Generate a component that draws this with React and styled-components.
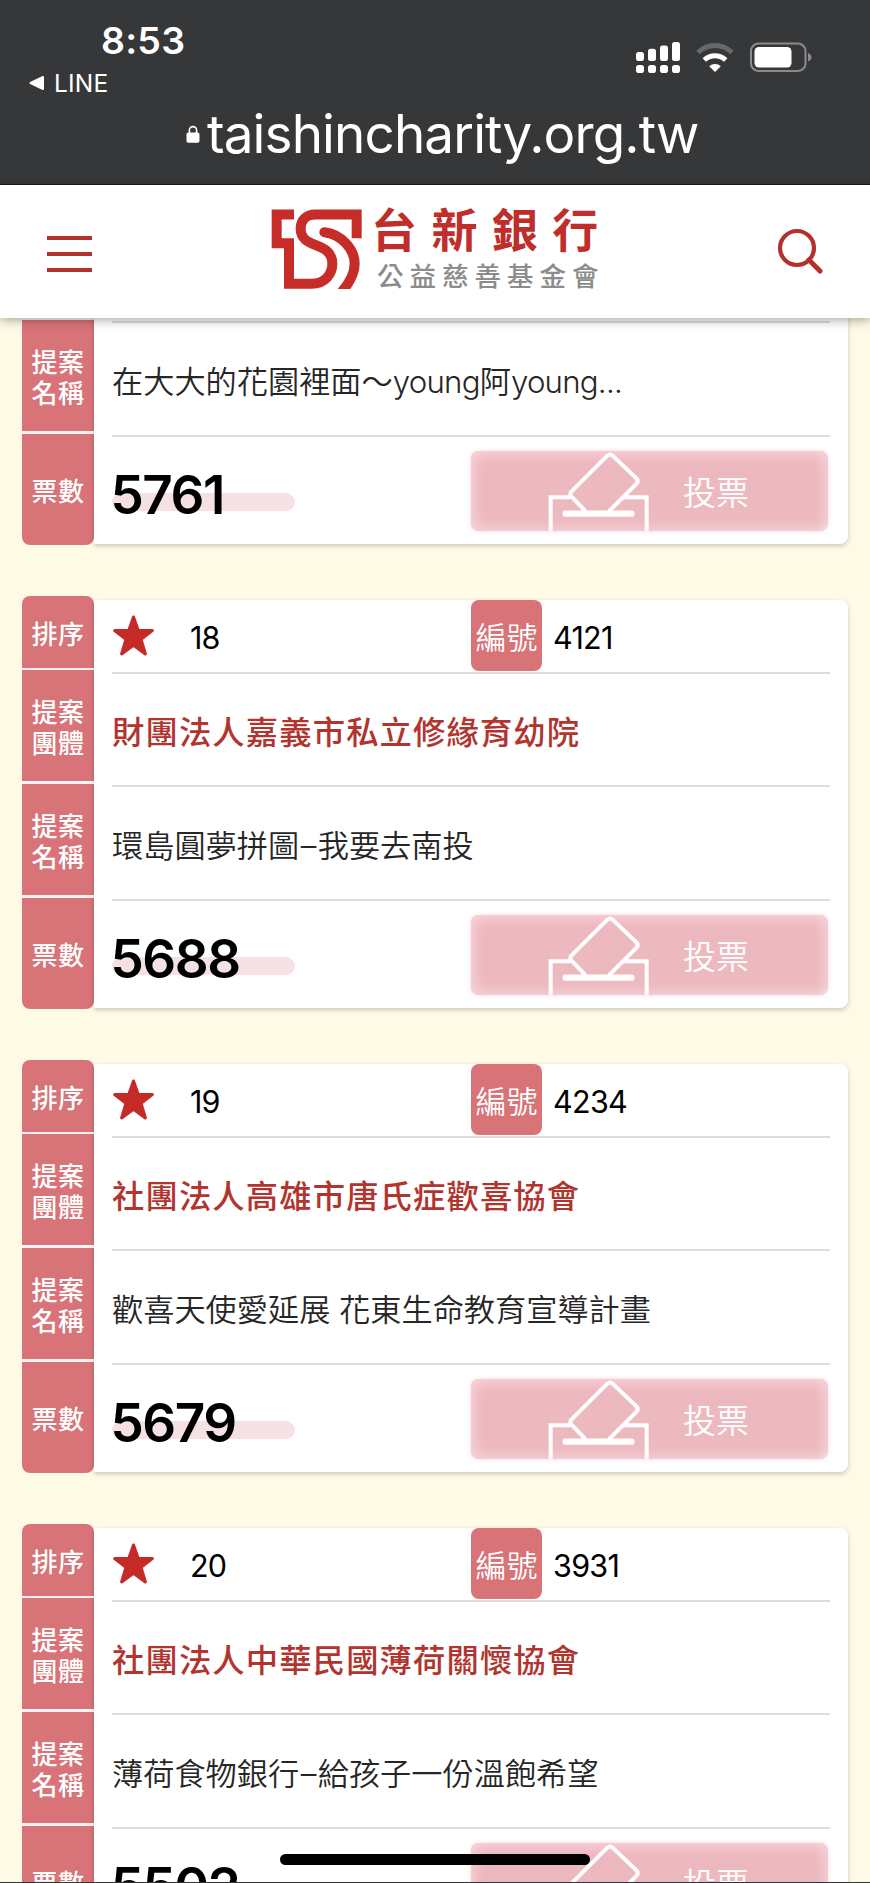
import styled, { createGlobalStyle } from "styled-components";

const GlobalStyle = createGlobalStyle`
  * {
    box-sizing: border-box;
  }
  body {
    margin: 0;
    background: #fefae6;
    font-family: Inter, "Noto Sans CJK TC", sans-serif;
  }
`;

const Screen = styled.div`
  width: 870px;
  height: 1883px;
  display: flex;
  flex-direction: column;
  overflow: hidden;
  position: relative;
  background: #fefae6;
`;

const BrowserBar = styled.div`
  height: 185px;
  flex-shrink: 0;
  background: #363739;
  border-bottom: 1px solid #1b1c1d;
  color: #fff;
`;

const StatusRow = styled.div`
  height: 100px;
  display: flex;
  justify-content: space-between;
  padding: 20px 58px 0 29px;
`;

const Clock = styled.div`
  height: 42px;
  line-height: 42px;
  padding-left: 72px;
  font-size: 37.5px;
  font-weight: 600;
  letter-spacing: 0.2px;
`;

const BackLink = styled.div`
  display: flex;
  align-items: center;
  gap: 9px;
  height: 42px;
  font-size: 24.5px;
  letter-spacing: 0.2px;
`;

const StatusIcons = styled.div`
  display: flex;
  align-items: flex-start;
  gap: 16px;
  padding-top: 22px;
`;

const AddressRow = styled.div`
  height: 68px;
  display: flex;
  align-items: center;
  padding-left: 186px;
  gap: 7px;
`;

const Address = styled.div`
  font-size: 53px;
  line-height: 66px;
  letter-spacing: -0.88px;
  white-space: nowrap;
`;

const Header = styled.header`
  height: 133px;
  flex-shrink: 0;
  display: flex;
  align-items: flex-start;
  justify-content: space-between;
  padding: 24px 47px 0;
  background: #fff;
  box-shadow: 0 2px 10px rgba(0, 0, 0, 0.35);
  position: relative;
  z-index: 1;
`;

const MenuButton = styled.button`
  width: 45px;
  height: 36px;
  margin-top: 27px;
  padding: 0;
  border: 0;
  background: none;
  display: flex;
  flex-direction: column;
  justify-content: space-between;
`;

const MenuLine = styled.span`
  height: 4.4px;
  background: #b3302c;
`;

const SearchButton = styled.button`
  margin-top: 18px;
  padding: 0;
  border: 0;
  background: none;
  line-height: 0;
`;

const Brand = styled.div`
  display: flex;
  margin-left: 8px;
  gap: 8px;
`;

const BrandText = styled.div`
  width: 234px;
  margin-top: -2px;
  white-space: nowrap;
`;

const BankName = styled.div`
  height: 53px;
  line-height: 46px;
  font-size: 46px;
  font-weight: 700;
  letter-spacing: 14.4px;
  color: #bf2e2a;
`;

const FundName = styled.div`
  height: 32px;
  line-height: 32px;
  padding-left: 6px;
  font-size: 26.5px;
  font-weight: 500;
  letter-spacing: 6px;
  color: #8c8c8c;
`;

const List = styled.main`
  flex: 1;
  min-height: 0;
  overflow: hidden;
`;

const Cards = styled.div`
  margin-top: -186px;
  padding: 0 22px;
  display: flex;
  flex-direction: column;
  gap: 51px;
`;

const Card = styled.article`
  height: 413px;
  display: flex;
  flex-shrink: 0;
`;

const Tabs = styled.div`
  width: 72px;
  height: 412.7px;
  display: grid;
  grid-template-rows: 71.7px 111.5px 111.5px 1fr;
  gap: 2.3px;
  background: #fff4f4;
  border-radius: 8px;
  overflow: hidden;
`;

const Tab = styled.div`
  display: flex;
  align-items: center;
  justify-content: center;
  padding-top: 4px;
  text-align: center;
  white-space: pre-line;
  background: #d87378;
  color: #fff;
  font-size: 26px;
  font-weight: 500;
  line-height: 31px;
  letter-spacing: 0.5px;

  &:first-child {
    padding-top: 6px;
  }
`;

const Body = styled.div`
  width: 754px;
  height: 408.3px;
  margin-top: 4px;
  padding: 0 18px;
  background: #fff;
  border-radius: 0 8px 8px 0;
  box-shadow: 0 2px 5px rgba(0, 0, 0, 0.2);
`;

const Row = styled.div`
  height: ${(p) => p.$height}px;
  display: flex;
  align-items: center;
  border-bottom: ${(p) => (p.$last ? "0" : "2px solid #dedede")};
  white-space: nowrap;
`;

const Cell = styled.div`
  width: 359px;
  flex-shrink: 0;
  display: flex;
  align-items: center;
`;

const Rank = styled.span`
  margin-left: 35px;
  padding-top: 4px;
  font-size: 30.5px;
  letter-spacing: -0.8px;
  color: #000;
`;

const Badge = styled.span`
  width: 71px;
  height: 71px;
  margin-right: 11px;
  display: flex;
  align-items: center;
  justify-content: center;
  background: #d87378;
  border-radius: 8px;
  color: #fff;
  font-size: 31px;
  font-weight: 350;
`;

const SerialNo = styled.span`
  padding-top: 4px;
  font-size: 30.5px;
  letter-spacing: -0.7px;
  color: #000;
`;

const Group = styled.h2`
  margin: 0;
  font-size: 32.3px;
  font-weight: 500;
  letter-spacing: 1.15px;
  color: #b1342e;
`;

const Title = styled.p`
  margin: 0;
  font-size: 31.2px;
  font-weight: 350;
  color: #262626;
`;

const Latin = styled.span`
  letter-spacing: -0.75px;
`;

const Dash = styled.span`
  padding: 0 1.5px;
`;

const Votes = styled.div`
  position: relative;
  z-index: 0;
  width: 183px;
  height: 64px;
  margin-top: 8px;
  line-height: 64px;
  font-size: 53px;
  font-weight: 600;
  letter-spacing: -1.5px;
  text-indent: -1.5px;
  color: #000;

  &::after {
    content: "";
    position: absolute;
    z-index: -1;
    left: 0;
    top: 30px;
    width: 183px;
    height: 18px;
    border-radius: 9px;
    background: #f5e0e3;
  }
`;

const VoteButton = styled.button`
  width: 357px;
  height: 80px;
  padding: 0 0 0 77px;
  border: 0;
  border-radius: 8px;
  display: flex;
  align-items: center;
  gap: 33px;
  background: #ecb9bf;
  box-shadow:
    inset 0 0 16px rgba(250, 240, 240, 0.75),
    inset 0 8px 16px rgba(250, 180, 198, 0.6),
    0 0 4px rgba(236, 185, 191, 0.5);
  color: #fff;
  font-family: inherit;
  font-size: 33px;
  font-weight: 350;
`;

const HomeIndicator = styled.div`
  position: absolute;
  left: 280px;
  bottom: 18px;
  width: 310px;
  height: 11px;
  border-radius: 6px;
  background: #000;
`;

const BottomEdge = styled.div`
  position: absolute;
  left: 0;
  right: 0;
  bottom: 0;
  height: 1px;
  background: #333;
`;

const Logo = () => (
  <svg width="92" height="80" viewBox="33 28 276 239">
    <g fill="none" stroke="#c62d28" strokeWidth="30">
      <path d="M102 44H50V130H87V252H155C195 252 217 222 217 192C217 122 122 150 122 87C122 62 138 44 165 44H290V115" />
      <path
        d="M193 97C240 102 284 145 284 192C284 224 268 250 244 278"
        strokeLinecap="round"
      />
    </g>
  </svg>
);

const Star = () => (
  <svg width="43" height="43" viewBox="0 0 42 42">
    <path
      d="M21 3L25.6 16.2H39.4L28.4 24.8L32.6 39L21 30.6L9.4 39L13.6 24.8L2.6 16.2H16.4Z"
      fill="#c42b26"
      stroke="#c42b26"
      strokeWidth="3"
      strokeLinejoin="round"
    />
  </svg>
);

const BallotBox = () => (
  <svg width="102" height="80" viewBox="25 18 306 240">
    <g
      fill="none"
      stroke="#fff"
      strokeWidth="12"
      strokeLinejoin="round"
      strokeLinecap="round"
    >
      <path d="M33 266V157H90M252 157H321V266" strokeLinejoin="miter" />
      <path d="M136 197L95 154Q89 147 95 140L203 32Q211 25 219 32L291 101Q297 108 291 116L210 197" />
      <path d="M78 206H275" strokeWidth="19" />
    </g>
  </svg>
);

const Lock = () => (
  <svg width="14" height="18" viewBox="0 0 14 18">
    <path
      d="M3.4 8V5.2a3.6 3.6 0 0 1 7.2 0V8"
      fill="none"
      stroke="#fff"
      strokeWidth="1.6"
    />
    <rect x="0.5" y="7.6" width="13" height="10.2" rx="1.8" fill="#fff" />
  </svg>
);

const Signal = () => (
  <svg width="44" height="32" viewBox="0 0 44 32" fill="#fff">
    {[0, 12, 24, 36].map((x, i) => (
      <g key={x}>
        <rect x={x} y={10 - i * 3.3} width="8" height={9 + i * 3.3} rx="2.5" />
        <rect x={x} y="23" width="8" height="8" rx="2.8" />
      </g>
    ))}
  </svg>
);

const Wifi = () => (
  <svg width="38" height="30" viewBox="0 0 38 30">
    <path
      d="M2 10.5A24 24 0 0 1 36 10.5"
      fill="none"
      stroke="#67686a"
      strokeWidth="5"
    />
    <path
      d="M8.3 18A15.5 15.5 0 0 1 29.7 18"
      fill="none"
      stroke="#fff"
      strokeWidth="5"
    />
    <path d="M19 30L13.2 24.2A8.4 8.4 0 0 1 24.8 24.2Z" fill="#fff" />
  </svg>
);

const Battery = () => (
  <svg width="62" height="30" viewBox="0 0 62 30">
    <rect
      x="1"
      y="1.5"
      width="54.5"
      height="27.5"
      rx="7.5"
      fill="none"
      stroke="#8b8c8d"
      strokeWidth="2"
    />
    <rect x="4.5" y="5" width="37" height="20.5" rx="4.5" fill="#fff" />
    <path d="M58 11q3.4 1.2 3.4 4.3T58 19.5Z" fill="#8b8c8d" />
  </svg>
);

const proposals = [
  // top rows are scrolled under the header
  {
    title: (
      <>
        在大大的花園裡面～<Latin>young</Latin>阿<Latin>young...</Latin>
      </>
    ),
    votes: 5761,
  },
  {
    rank: 18,
    no: "4121",
    group: "財團法人嘉義市私立修緣育幼院",
    title: (
      <>
        環島圓夢拼圖<Dash>–</Dash>我要去南投
      </>
    ),
    votes: 5688,
  },
  {
    rank: 19,
    no: "4234",
    group: "社團法人高雄市唐氏症歡喜協會",
    title: "歡喜天使愛延展 花東生命教育宣導計畫",
    votes: 5679,
  },
  {
    rank: 20,
    no: "3931",
    group: "社團法人中華民國薄荷關懷協會",
    title: (
      <>
        薄荷食物銀行<Dash>–</Dash>給孩子一份溫飽希望
      </>
    ),
    votes: 5502,
  },
];

function ProposalCard({ rank, no, group, title, votes }) {
  return (
    <Card>
      <Tabs>
        <Tab>{rank && "排序"}</Tab>
        <Tab>{group && "提案\n團體"}</Tab>
        <Tab>{"提案\n名稱"}</Tab>
        <Tab>票數</Tab>
      </Tabs>
      <Body>
        <Row $height={73.7}>
          {rank && (
            <>
              <Cell>
                <Star />
                <Rank>{rank}</Rank>
              </Cell>
              <Badge>編號</Badge>
              <SerialNo>{no}</SerialNo>
            </>
          )}
        </Row>
        <Row $height={113.7}>{group && <Group>{group}</Group>}</Row>
        <Row $height={113.7}>
          <Title>{title}</Title>
        </Row>
        <Row $height={107} $last>
          <Cell>
            <Votes>{votes}</Votes>
          </Cell>
          <VoteButton>
            <BallotBox />
            投票
          </VoteButton>
        </Row>
      </Body>
    </Card>
  );
}

function App() {
  return (
    <>
      <GlobalStyle />
      <Screen>
        <BrowserBar>
          <StatusRow>
            <div>
              <Clock>8:53</Clock>
              <BackLink>
                <svg width="16" height="16" viewBox="0 0 16 16">
                  <path
                    d="M1.5 8L14 2V14Z"
                    fill="#fff"
                    stroke="#fff"
                    strokeWidth="2"
                    strokeLinejoin="round"
                  />
                </svg>
                LINE
              </BackLink>
            </div>
            <StatusIcons>
              <Signal />
              <Wifi />
              <Battery />
            </StatusIcons>
          </StatusRow>
          <AddressRow>
            <Lock />
            <Address>taishincharity.org.tw</Address>
          </AddressRow>
        </BrowserBar>
        <Header>
          <MenuButton>
            <MenuLine />
            <MenuLine />
            <MenuLine />
          </MenuButton>
          <Brand>
            <Logo />
            <BrandText>
              <BankName>台新銀行</BankName>
              <FundName>公益慈善基金會</FundName>
            </BrandText>
          </Brand>
          <SearchButton>
            <svg width="47" height="47" viewBox="0 0 47 47">
              <g fill="none" stroke="#b3302c" strokeWidth="4.2">
                <circle cx="21" cy="21" r="17" />
                <path d="M33 33L44 44" strokeWidth="5" strokeLinecap="round" />
              </g>
            </svg>
          </SearchButton>
        </Header>
        <List>
          <Cards>
            {proposals.map((p) => (
              <ProposalCard key={p.votes} {...p} />
            ))}
          </Cards>
        </List>
        <HomeIndicator />
        <BottomEdge />
      </Screen>
    </>
  );
}

export default App;
